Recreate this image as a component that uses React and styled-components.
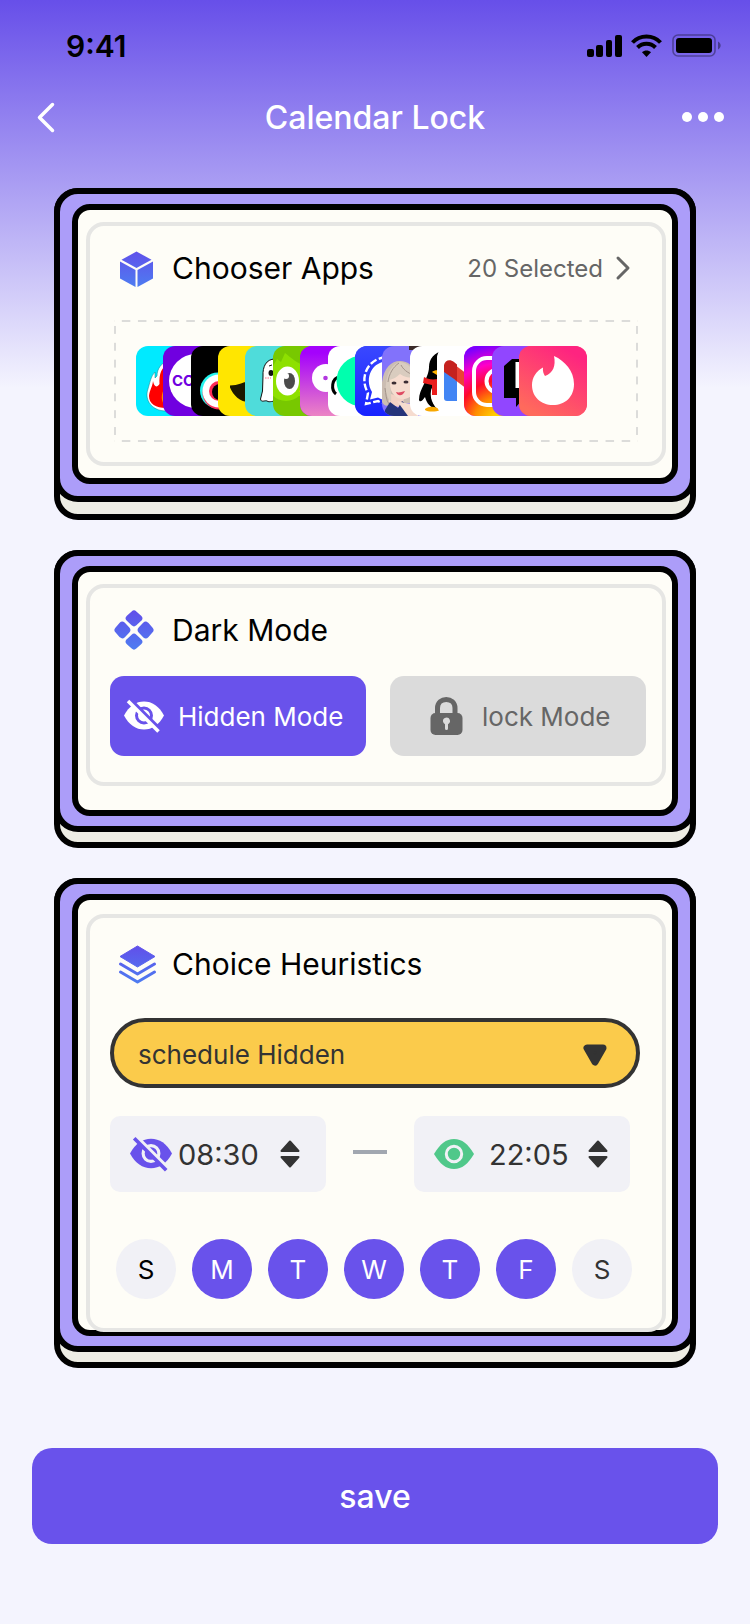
import { useState } from "react";
import styled, { createGlobalStyle } from "styled-components";

const GlobalStyle = createGlobalStyle`
    *{
        box-sizing: border-box;
    }
    body{
        margin: 0;
        background-color: #f4f4fe;
        font-family: Inter, "Noto Sans", sans-serif;
        color: #000;
    }
    button, input, select{
        font-family: inherit;
        color: inherit;
        margin: 0;
        padding: 0;
        border: 0;
        background: none;
    }
    button{
        cursor: pointer;
    }
    svg{
        display: block;
        flex: none;
    }
`;

function StatusIcons(){
    return(
        <svg width="136" height="24" viewBox="0 0 136 24" aria-hidden="true">
            <rect x="0" y="15" width="7" height="8" rx="2" />
            <rect x="9" y="11" width="7" height="12" rx="2" />
            <rect x="19" y="6" width="6" height="17" rx="2" />
            <rect x="28" y="1" width="7" height="22" rx="2" />
            <g fill="none" stroke="#000" strokeWidth="4">
                <path d="M45.500 8.500 C53 0.500 66 0.500 73.500 8.500" />
                <path d="M50.500 13.500 C55.500 8.500 63.500 8.500 68.500 13.500" />
            </g>
            <path d="M59.500 23 L55 18.300 C57.500 16 61.500 16 64 18.300 Z" />
            <rect x="86" y="1" width="42" height="21" rx="5" fill="none" stroke="#000" strokeOpacity="0.35" strokeWidth="1.600" />
            <rect x="89" y="4" width="36" height="15" rx="3" />
            <path d="M131 7.500 C134.500 9 134.500 14 131 15.500 Z" fillOpacity="0.4" />
        </svg>
    );
}

function IconGradient({ id }){
    return(
        <linearGradient id={id} x1="0" y1="0" x2="0" y2="44" gradientUnits="userSpaceOnUse">
            <stop offset="0.1" stopColor="#6150ea" />
            <stop offset="0.95" stopColor="#4d7df1" />
        </linearGradient>
    );
}

function CubeIcon(){
    return(
        <svg width="44" height="44" viewBox="0 0 44 44" aria-hidden="true">
            <defs><IconGradient id="cube" /></defs>
            <g fill="url(#cube)">
                <path d="M22.500 5.500 L37.500 13.800 L22.500 22 L7.500 13.800 Z" />
                <path d="M6 15.500 L21.500 24 V41 L6 32.500 Z" />
                <path d="M39 15.500 L23.500 24 V41 L39 32.500 Z" />
            </g>
        </svg>
    );
}

function DiamondsIcon(){
    return(
        <svg width="44" height="44" viewBox="0 0 44 44" aria-hidden="true">
            <defs><IconGradient id="diamonds" /></defs>
            <path
                fill="url(#diamonds)"
                stroke="url(#diamonds)"
                strokeWidth="7"
                strokeLinejoin="round"
                d="M20 6 L24.800 10.300 L20 14.800 L15.200 10.300 Z M20 29.200 L24.800 33.700 L20 38 L15.200 33.700 Z M8.300 17.200 L12.800 22 L8.300 26.800 L4 22 Z M31.700 17.200 L36 22 L31.700 26.800 L27.200 22 Z"
            />
        </svg>
    );
}

function LayersIcon(){
    return(
        <svg width="44" height="44" viewBox="0 0 44 44" aria-hidden="true">
            <defs><IconGradient id="layers" /></defs>
            <path fill="url(#layers)" stroke="url(#layers)" strokeLinejoin="round" d="M23.500 4 L41 14.500 L23.500 25 L6 14.500 Z" />
            <g fill="none" stroke="url(#layers)" strokeWidth="3" strokeLinecap="round" strokeLinejoin="round">
                <path d="M6.500 22 L23.500 32 L40.500 22" />
                <path d="M6.500 30 L23.500 40 L40.500 30" />
            </g>
        </svg>
    );
}

function EyeOffIcon({ color, back, size }){
    return(
        <svg width={size} height={size} viewBox="0 0 40 40" aria-hidden="true">
            <path fill={color} d="M0 19.500 C5 10 12 5.500 20 5.500 C28 5.500 35 10 40 19.500 C35 29 28 33.500 20 33.500 C12 33.500 5 29 0 19.500 Z" />
            <circle cx="20" cy="19.500" r="7.500" fill="none" stroke={back} strokeWidth="3" />
            <path d="M5.500 3 L37 34.500" stroke={back} strokeWidth="4" />
            <path d="M4 5 L34.500 35.500" stroke={color} strokeWidth="3.500" />
        </svg>
    );
}

function EyeIcon({ color, back }){
    return(
        <svg width="40" height="40" viewBox="0 0 40 40" aria-hidden="true">
            <path fill={color} d="M0 20 C6 10 12 5 20 5 C28 5 34 10 40 20 C34 30 28 35 20 35 C12 35 6 30 0 20 Z" />
            <circle cx="20" cy="20" r="7.700" fill="none" stroke={back} strokeWidth="3" />
        </svg>
    );
}

function LockIcon(){
    return(
        <svg width="33" height="40" viewBox="0 0 33 40" aria-hidden="true">
            <path fill="none" stroke="#666" strokeWidth="5" d="M7.500 20 V12 C7.500 0.500 25 0.500 25 12 V20" />
            <rect x="0.500" y="17" width="32" height="22" rx="5" fill="#666" />
            <path fill="#dbdbdb" d="M13 25.500 A3.500 3.500 0 1 1 18 28.200 V32.500 A1.500 1.500 0 0 1 15 32.500 V28.200 A3.500 3.500 0 0 1 13 25.500 Z" />
        </svg>
    );
}

function StepIcon(){
    return(
        <svg width="20" height="28" viewBox="0 0 20 28" aria-hidden="true">
            <g fill="#333" stroke="#333" strokeWidth="2" strokeLinejoin="round">
                <path d="M10 1.500 L18.500 11 H1.500 Z" />
                <path d="M10 26.500 L18.500 17 H1.500 Z" />
            </g>
        </svg>
    );
}

// every app picture is drawn on a 68 x 70 tile
const apps = [
    {
        name: "Streaks",
        color: "#00eaff",
        art: <>
            <path fill="#fff" stroke="#0a7f8a" strokeWidth="0.500" d="M33 14 C25 17 21 23 21 30 L19 32 L19 26 C15 30 14 36 12 43 C8 54 16 65 30 65 H44 V14 Z" />
            <path fill="#f00" d="M34 17 C25 21 23 28 23.500 38 C21 42 18 41 17 35 C16.500 41 13.500 44 13 50 C13 58 20 62 30 62 H44 V17 Z" />
            <path fill="#ff8a00" d="M29 42 C25 47 24 56 30 60 H40 V42 Z" />
        </>,
    },
    {
        name: "Common",
        color: "#7000e0",
        art: <>
            <circle cx="33" cy="35" r="27" fill="#fff" />
            <text x="9" y="40" fontSize="15" fontWeight="700" fill="#7000e0">CO</text>
        </>,
    },
    {
        name: "Tok",
        color: "#000",
        art: <>
            <circle cx="27" cy="44.500" r="18" fill="#25f4ee" />
            <circle cx="28.500" cy="46.500" r="17" fill="#fe2c55" />
            <circle cx="28" cy="45" r="16.500" fill="#fff" />
            <circle cx="28" cy="45" r="10" fill="#fe2c55" />
            <circle cx="29" cy="46" r="8" fill="#000" />
        </>,
    },
    {
        name: "Smile",
        color: "#ffe600",
        art: <path fill="#1c1800" d="M12 39.500 C20 39.500 26 36 34 34 V56 C22 57 16 50 12 41.500 Z" />,
    },
    {
        name: "Ghost",
        color: "#4fdcda",
        art: <>
            <path fill="#fff" stroke="#111" strokeWidth="1" d="M30 13 C21 13 17.500 21 18 30 L17.500 45 L15.500 53 C16 57 20 54 22 55 C25 57 27 54 34 56 V13 Z" />
            <ellipse cx="26" cy="27" rx="2.500" ry="3" fill="#111" />
            <path d="M24 20 L27 19" stroke="#111" />
            <path d="M20 32 H26" stroke="#ff9eb0" strokeWidth="1.500" strokeDasharray="1.500 1" />
        </>,
    },
    {
        name: "Owl",
        color: "#78c800",
        art: <>
            <path fill="#8ee000" d="M0 20 L4 13 L8 16 L12 7 C18 12 24 17 34 21 V50 H0 Z" />
            <circle cx="13" cy="36" r="19" fill="#8ee000" />
            <ellipse cx="14.500" cy="35" rx="11.500" ry="14.500" fill="#fff" />
            <ellipse cx="16.500" cy="35" rx="5.500" ry="8" fill="#4b4b4b" />
            <circle cx="13" cy="30" r="3" fill="#fff" />
            <path fill="#ffc200" d="M26 45 L30 43 V49 Z" />
        </>,
    },
    {
        name: "Panda",
        color: "#a600ff",
        art: <>
            <defs>
                <linearGradient id="panda" x1="0" y1="0" x2="0" y2="1">
                    <stop offset="0.1" stopColor="#a402fc" />
                    <stop offset="1" stopColor="#ec84c4" />
                </linearGradient>
            </defs>
            <rect width="68" height="70" fill="url(#panda)" />
            <circle cx="26" cy="32" r="14" fill="#fff" />
            <circle cx="25.500" cy="32" r="2.300" fill="#b238e0" />
        </>,
    },
    {
        name: "Music",
        color: "#fff",
        art: <>
            <path fill="none" stroke="#000" strokeWidth="3" d="M12 31 C3 32 3 44 8 48" />
            <circle cx="34" cy="35" r="25.500" fill="#00ffae" />
        </>,
    },
    {
        name: "Signal",
        color: "#3040ff",
        art: <>
            <defs>
                <linearGradient id="signal" x1="0" y1="0" x2="0" y2="1">
                    <stop offset="0" stopColor="#3a48ff" />
                    <stop offset="1" stopColor="#1822ff" />
                </linearGradient>
            </defs>
            <rect width="68" height="70" fill="url(#signal)" />
            <path fill="none" stroke="#fff" strokeWidth="2.400" strokeDasharray="7 2.500" d="M34 58 C30 58 26 57 23 55 L11 58 L13 47 C4 32 12 11 34 11" />
            <path fill="#fff" d="M34 15 C17 15 9 32 17 46 L15 53.500 L23 51.500 C27 54 30 54 34 54 Z" />
        </>,
    },
    {
        name: "Avatar",
        color: "#8272fb",
        art: <>
            <path fill="#cbbdb2" d="M0 36 C2 22 9 15 18 15 C26 15 32 20 34 30 V58 L10 56 C6 62 2 60 0 56 Z" />
            <path fill="#f3d2c5" d="M9 48 L22 52 L20 62 L6 58 Z" />
            <path fill="#f6dccf" d="M7 32 C10 28 15 26 18 25 C22 28 28 28 34 30 V44 C30 52 22 55 16 52 C10 49 7 42 7 32 Z" />
            <path fill="#d9ccbf" d="M4 38 C5 26 11 17 18 16 C26 17 31 22 34 32 C28 32 22 31 18 28 C14 32 10 33 8 34 C8 44 10 50 9 56 C4 50 3 44 4 38 Z" />
            <path fill="none" stroke="#a3948b" strokeWidth="1" d="M17 17 C11 21 7 28 6 36 M19 19 C22 25 28 28 34 30 M3 42 C4 48 4 54 7 58" />
            <path fill="#25347a" d="M3 64 L8 56 L16 62 L20 55 L34 66 V70 H3 Z" />
            <path fill="#f6dccf" d="M15 55 L36 60 V70 H26 Z" />
            <ellipse cx="12" cy="37" rx="2.500" ry="1.600" fill="#3c2d33" />
            <ellipse cx="24" cy="36" rx="2.500" ry="1.600" fill="#3c2d33" />
            <path fill="#df4a62" d="M14 46 C17 47 19 46 23 45 C21 50 16 51 14 46 Z" />
            <rect x="27" y="0" width="16" height="4" fill="#3a2a28" />
        </>,
    },
    {
        name: "Penguin",
        color: "#fff",
        art: <>
            <path fill="#000" d="M34 5 C24 6 19 13 19 21 C19 27 16 32 14 38 C11 44 9 48 9 54 C10 57 13 54 15 51 C17 58 20 61 28 64 C20 56 19 46 23 40 L34 30 Z" />
            <path fill="#fff" d="M23 40 C19 48 21 56 28 62 H34 V34 Z" />
            <path fill="#ffb400" d="M22 26 C24 24 28 24 34 25 V29 H27 Z" />
            <path fill="#ea1c1c" d="M14 31 C19 34 24 34 34 32 V49 H22 V39 L13 37 Z" />
            <path fill="#f8a800" d="M15 63 C19 60 26 60 30 64 C26 66 18 66 15 64 Z" />
        </>,
    },
    {
        name: "Mail",
        color: "#fff",
        art: <>
            <path fill="#4285f4" d="M7 24 L20 30 V55 H10 C8 55 7 54 7 52 Z" />
            <path fill="#ea4335" d="M18 19 L34 31 V46 L18 34 Z" />
            <path fill="#c5221f" d="M7 26 V19 C8 14 13 13 17 16 L20 18.500 V35 Z" />
        </>,
    },
    {
        name: "Camera",
        color: "#f0f",
        art: <>
            <defs>
                <radialGradient id="camera" cx="36" cy="78" r="84" gradientUnits="userSpaceOnUse">
                    <stop offset="0.1" stopColor="#ffd600" />
                    <stop offset="0.32" stopColor="#ff8a00" />
                    <stop offset="0.52" stopColor="#ff0a2a" />
                    <stop offset="0.72" stopColor="#ff00c8" />
                    <stop offset="0.95" stopColor="#7a00ff" />
                </radialGradient>
            </defs>
            <rect width="68" height="70" fill="url(#camera)" />
            <g fill="none" stroke="#fff" strokeWidth="4">
                <rect x="10" y="12" width="48" height="47" rx="13" />
                <circle cx="34" cy="35" r="11.500" />
            </g>
        </>,
    },
    {
        name: "Stream",
        color: "#9146ff",
        art: <>
            <path fill="#000" d="M20 13 H50 V52 H32 L24 61 V52 H12 V20 Z" />
            <path fill="#fff" d="M23.500 16 H48 V42 H23.500 Z" />
        </>,
    },
    {
        name: "Flame",
        color: "#ff4470",
        art: <>
            <defs>
                <linearGradient id="flame" x1="0.8" y1="0.1" x2="0.3" y2="1">
                    <stop offset="0" stopColor="#fe2480" />
                    <stop offset="1" stopColor="#ff6a5c" />
                </linearGradient>
            </defs>
            <rect width="68" height="70" fill="url(#flame)" />
            <path fill="#fff" d="M35 10 C46 15 55 25 55 38 C55 51 46 59 34 59 C22 59 13 51 13 39 C13 32 17 25 24 21.500 C23.500 25 24.500 28 26 30 C34 27 37 20 35 10 Z" />
        </>,
    },
];

const week = [
    {id: "sun", letter: "S"},
    {id: "mon", letter: "M"},
    {id: "tue", letter: "T"},
    {id: "wed", letter: "W"},
    {id: "thu", letter: "T"},
    {id: "fri", letter: "F"},
    {id: "sat", letter: "S"},
];

function Panel({ edge, top, bottom, children }){
    return(
        <PanelBase $edge={edge}>
            <PanelFrame $edge={edge}>
                <PanelSheet $top={top}>
                    <PanelBody $bottom={bottom}>{children}</PanelBody>
                </PanelSheet>
            </PanelFrame>
        </PanelBase>
    );
}

function App(){
    const [mode, setMode] = useState("hidden");
    const [from, setFrom] = useState("08:30");
    const [to, setTo] = useState("22:05");
    const [days, setDays] = useState(["mon", "tue", "wed", "thu", "fri"]);

    function toggleDay(id){
        setDays(days => days.includes(id) ? days.filter(day => day !== id) : [...days, id]);
    }

    return(
        <Page>
            <GlobalStyle />
            <StatusBar>
                <Clock>9:41</Clock>
                <StatusIcons />
            </StatusBar>
            <NavBar>
                <NavButton aria-label="Back">
                    <svg width="42" height="32" viewBox="0 0 42 32" aria-hidden="true">
                        <path d="M26.500 2.500 L13.500 15.500 L26.500 28.500" fill="none" stroke="#fff" strokeWidth="3.500" strokeLinecap="round" strokeLinejoin="round" />
                    </svg>
                </NavButton>
                <PageTitle>Calendar Lock</PageTitle>
                <NavButton aria-label="More">
                    <svg width="42" height="32" viewBox="0 0 42 32" fill="#fff" aria-hidden="true">
                        <circle cx="5" cy="15" r="5" />
                        <circle cx="21" cy="15" r="5" />
                        <circle cx="37" cy="15" r="5" />
                    </svg>
                </NavButton>
            </NavBar>

            <Panels>
                <Panel edge={12} top={12} bottom={12}>
                    <PanelHeader>
                        <CubeIcon />
                        <PanelTitle>Chooser Apps</PanelTitle>
                        <SelectedLink href="#apps">
                            20 Selected
                            <svg width="16" height="26" viewBox="0 0 16 26" aria-hidden="true">
                                <path d="M3 3 L13 13 L3 23" fill="none" stroke="#666" strokeWidth="3" strokeLinecap="round" strokeLinejoin="round" />
                            </svg>
                        </SelectedLink>
                    </PanelHeader>
                    <AppsBox>
                        <AppStrip>
                            {apps.map(app => (
                                <AppSlot key={app.name}>
                                    <AppTile $color={app.color} viewBox="0 0 68 70" role="img" aria-label={app.name}>
                                        {app.art}
                                    </AppTile>
                                </AppSlot>
                            ))}
                        </AppStrip>
                    </AppsBox>
                </Panel>

                <Panel edge={10} top={12} bottom={24}>
                    <PanelHeader>
                        <DiamondsIcon />
                        <PanelTitle>Dark Mode</PanelTitle>
                    </PanelHeader>
                    <Modes>
                        <ModeButton $active={mode === "hidden"} $inset={14} aria-pressed={mode === "hidden"} onClick={() => setMode("hidden")}>
                            <EyeOffIcon color="#fff" back="#6952eb" size={40} />
                            Hidden Mode
                        </ModeButton>
                        <ModeButton $active={mode === "lock"} $inset={40} aria-pressed={mode === "lock"} onClick={() => setMode("lock")}>
                            <LockIcon />
                            lock Mode
                        </ModeButton>
                    </Modes>
                </Panel>

                <Panel edge={10} top={14} bottom={-2}>
                    <PanelHeader $tall>
                        <LayersIcon />
                        <PanelTitle>Choice Heuristics</PanelTitle>
                    </PanelHeader>
                    <SelectWrapper>
                        <ScheduleSelect aria-label="Choice Heuristics" defaultValue="hidden">
                            <option value="hidden">schedule Hidden</option>
                            <option value="lock">schedule lock</option>
                        </ScheduleSelect>
                        <SelectArrow width="24" height="22" viewBox="0 0 24 22" aria-hidden="true">
                            <path d="M4 4 H20 L12 18 Z" fill="#333" stroke="#333" strokeWidth="7" strokeLinejoin="round" />
                        </SelectArrow>
                    </SelectWrapper>
                    <Times>
                        <TimeBox $gap={6} $end={26}>
                            <EyeOffIcon color="#6952eb" back="#f1f1f6" size={42} />
                            <TimeInput aria-label="Hide at" value={from} onChange={e => setFrom(e.target.value)} />
                            <StepButton aria-label="Change hide time"><StepIcon /></StepButton>
                        </TimeBox>
                        <TimeDash />
                        <TimeBox $gap={15} $end={22}>
                            <EyeIcon color="#50c88a" back="#f1f1f6" />
                            <TimeInput aria-label="Show at" value={to} onChange={e => setTo(e.target.value)} />
                            <StepButton aria-label="Change show time"><StepIcon /></StepButton>
                        </TimeBox>
                    </Times>
                    <Week>
                        {week.map(day => (
                            <DayButton
                                key={day.id}
                                $active={days.includes(day.id)}
                                $first={day.id === "sun"}
                                aria-pressed={days.includes(day.id)}
                                onClick={() => toggleDay(day.id)}
                            >
                                {day.letter}
                            </DayButton>
                        ))}
                    </Week>
                </Panel>
            </Panels>

            <Footer>
                <SaveButton>save</SaveButton>
            </Footer>
        </Page>
    );
}

const Page = styled.div`
    background: linear-gradient(#674fe9 0, #f4f4fe 388px);
`;

const StatusBar = styled.div`
    display: flex;
    justify-content: space-between;
    align-items: center;
    height: 92px;
    padding: 0 27px 0 66px;
`;

const Clock = styled.span`
    font-size: 30px;
    font-weight: 600;
`;

const NavBar = styled.header`
    display: grid;
    grid-template-columns: 1fr auto 1fr;
    align-items: center;
    height: 52px;
    padding: 0 26px;
`;

const NavButton = styled.button`
    justify-self: start;
    &:last-child{
        justify-self: end;
    }
`;

const PageTitle = styled.h1`
    margin: 0;
    font-size: 32px;
    font-weight: 500;
    line-height: 40px;
    color: #fff;
`;

const Panels = styled.main`
    display: flex;
    flex-direction: column;
    gap: 30px;
    padding: 44px 54px 80px;
`;

const PanelBase = styled.section`
    padding-bottom: ${props => props.$edge}px;
    border: 6px solid #000;
    border-radius: 24px;
    background-color: #eeede4;
`;

/* the frame shares its outline with the base behind it */
const PanelFrame = styled.div`
    margin: -6px -6px 0;
    padding: 10px 12px ${props => props.$edge}px;
    border: 6px solid #000;
    border-radius: 24px;
    background-color: #ac9df9;
`;

const PanelSheet = styled.div`
    display: flow-root;
    padding: ${props => props.$top}px 6px 0 8px;
    border: 6px solid #000;
    border-radius: 18px;
    background-color: #fefdf7;
`;

const PanelBody = styled.div`
    margin-bottom: ${props => props.$bottom}px;
    padding: 0 16px 20px 20px;
    border: 4px solid #e6e6e4;
    border-radius: 18px;
    background-color: #fefdf7;
`;

const PanelHeader = styled.div`
    display: flex;
    align-items: center;
    gap: 14px;
    height: 44px;
    margin: ${props => props.$tall ? "24px 4px 32px" : "20px 4px 24px"};
`;

const PanelTitle = styled.h2`
    margin: 0;
    font-size: 30px;
    font-weight: 400;
    line-height: 40px;
`;

const SelectedLink = styled.a`
    display: flex;
    align-items: center;
    gap: 12px;
    margin-left: auto;
    margin-right: 11px;
    font-size: 24px;
    color: #666;
    text-decoration: none;
`;

/* long dashes, wider than a dashed border gives */
const AppsBox = styled.div`
    margin: 30px 8px 0 4px;
    padding: 24px 47px 24px 18px;
    border: 2px solid transparent;
    border-width: 2px 4px;
    background-image:
        linear-gradient(90deg, transparent 4px, #dcdcda 4px, #dcdcda 12px, transparent 12px),
        linear-gradient(90deg, transparent 4px, #dcdcda 4px, #dcdcda 12px, transparent 12px),
        linear-gradient(transparent 4px, #dcdcda 4px, #dcdcda 12px, transparent 12px),
        linear-gradient(transparent 4px, #dcdcda 4px, #dcdcda 12px, transparent 12px);
    background-size: 16px 2px, 16px 2px, 2px 17px, 2px 17px;
    background-repeat: round no-repeat, round no-repeat, no-repeat round, no-repeat round;
    background-position: 0 -2px, 0 calc(100% + 2px), -4px 0, calc(100% + 4px) 0;
`;

const AppStrip = styled.ul`
    display: flex;
    margin: 0;
    padding: 0;
    list-style: none;
`;

const AppSlot = styled.li`
    flex: 1 1 0;
    min-width: 0;
    &:last-child{
        flex: none;
    }
`;

const AppTile = styled.svg`
    width: 68px;
    height: 70px;
    border-radius: 12px;
    background-color: ${props => props.$color};
`;

const Modes = styled.div`
    display: grid;
    grid-template-columns: 1fr 1fr;
    gap: 24px;
    padding-bottom: 6px;
`;

const ModeButton = styled.button`
    display: flex;
    align-items: center;
    gap: ${props => props.$inset > 20 ? 19 : 14}px;
    height: 80px;
    padding-left: ${props => props.$inset}px;
    border-radius: 14px;
    font-size: 26px;
    white-space: nowrap;
    color: ${props => props.$active ? "#fff" : "#666"};
    background-color: ${props => props.$active ? "#6952eb" : "#dbdbdb"};
`;

const SelectWrapper = styled.div`
    position: relative;
    margin-right: 6px;
`;

const ScheduleSelect = styled.select`
    display: block;
    width: 100%;
    height: 70px;
    padding: 2px 60px 0 24px;
    appearance: none;
    border: 4px solid #333;
    border-radius: 35px;
    font-size: 26px;
    color: #333;
    background-color: #fbcb4b;
`;

const SelectArrow = styled.svg`
    position: absolute;
    top: 26px;
    right: 33px;
    pointer-events: none;
`;

const Times = styled.div`
    display: flex;
    justify-content: space-between;
    align-items: center;
    margin: 28px 16px 47px 0;
`;

const TimeBox = styled.div`
    display: flex;
    align-items: center;
    gap: ${props => props.$gap}px;
    width: 216px;
    height: 76px;
    padding: 0 ${props => props.$end}px 0 20px;
    border-radius: 10px;
    background-color: #f1f1f6;
`;

const TimeInput = styled.input`
    flex: 1;
    min-width: 0;
    height: 40px;
    font-size: 29px;
    color: #333;
`;

const StepButton = styled.button`
    flex: none;
`;

const TimeDash = styled.span`
    width: 34px;
    height: 4px;
    margin-bottom: 4px;
    background-color: #a1a7b0;
`;

const Week = styled.div`
    display: flex;
    justify-content: space-between;
    margin: 0 14px 9px 6px;
`;

const DayButton = styled.button`
    width: 60px;
    height: 60px;
    border-radius: 50%;
    font-size: 26px;
    color: ${props => props.$active ? "#fff" : props.$first ? "#000" : "#333"};
    background-color: ${props => props.$active ? "#6952eb" : "#f1f1f6"};
`;

const Footer = styled.footer`
    padding: 0 32px 80px;
`;

const SaveButton = styled.button`
    display: block;
    width: 100%;
    height: 96px;
    border-radius: 20px;
    font-size: 32px;
    font-weight: 500;
    color: #fff;
    background-color: #6952eb;
`;

export default App;
